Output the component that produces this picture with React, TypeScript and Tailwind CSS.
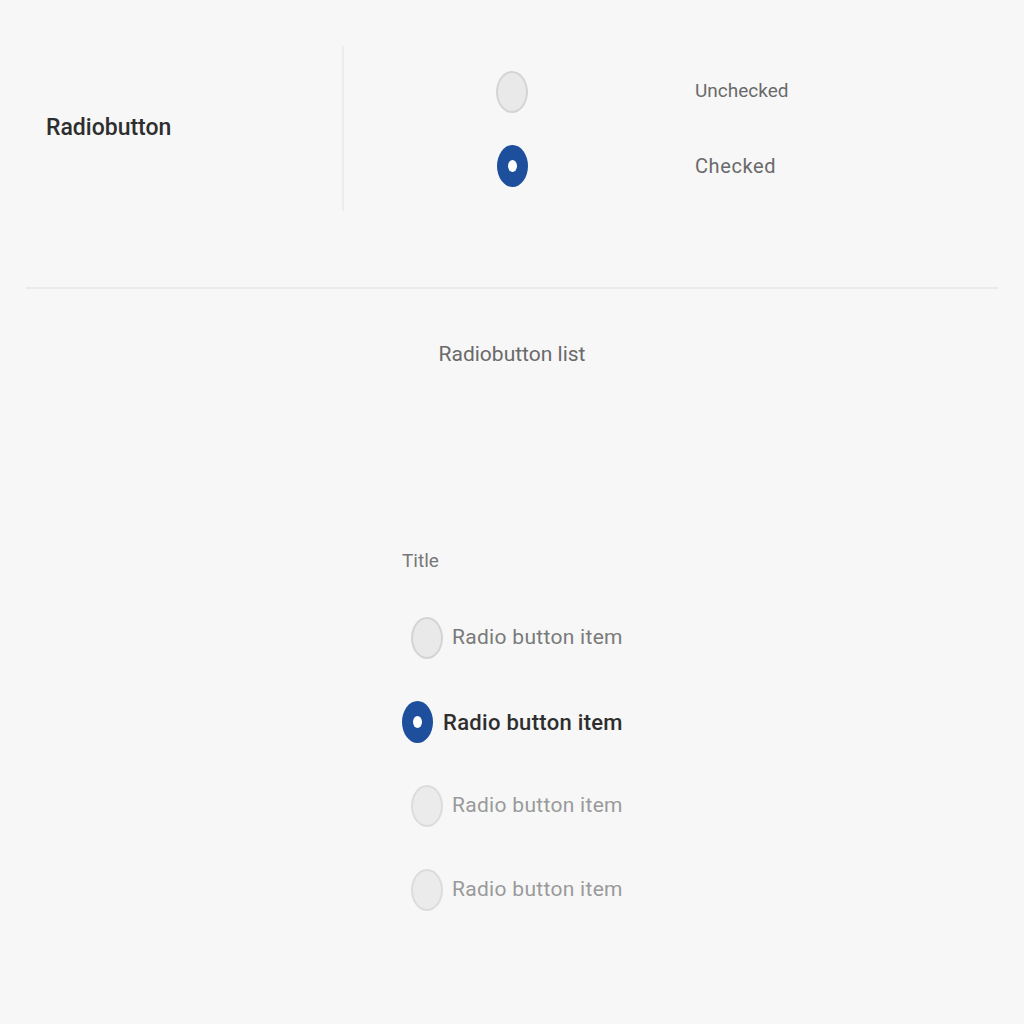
import React from "react";

const items = [
  { label: "Radio button item", state: "unchecked" },
  { label: "Radio button item", state: "checked" },
  { label: "Radio button item", state: "disabled" },
  { label: "Radio button item", state: "disabled" },
];

const Radio = ({ checked, disabled }: { checked?: boolean; disabled?: boolean }) => {
  if (checked) {
    return (
      <span className="flex h-[42px] w-[31px] shrink-0 items-center justify-center rounded-[50%] bg-[#1d4f9c]">
        <span className="h-[12px] w-[9px] rounded-[50%] bg-white" />
      </span>
    );
  }
  return (
    <span
      className={
        disabled
          ? "block h-[42px] w-[32px] shrink-0 rounded-[50%] border-2 border-[#dcdcdc] bg-[#ebebeb]"
          : "block h-[42px] w-[32px] shrink-0 rounded-[50%] border-2 border-[#d4d4d4] bg-[#e9e9e9]"
      }
    />
  );
};

export default function App() {
  return (
    <div className="min-h-screen bg-[#f7f7f7] font-['Roboto',sans-serif]">
      {/* Single radio */}
      <div className="flex pt-[46px]">
        <div className="flex w-[342px] items-center pl-[46px]">
          <span className="text-[23px] font-medium text-[#2e2e2e]">Radiobutton</span>
        </div>
        <div className="h-[165px] w-[2px] bg-[#ececec]" />
        <div className="flex flex-1 flex-col justify-center">
          <div className="flex h-[74px] items-center">
            <div className="flex w-[336px] justify-center">
              <Radio />
            </div>
            <span className="pl-[15px] text-[19px] text-[#6a6a6a]">Unchecked</span>
          </div>
          <div className="flex h-[74px] items-center">
            <div className="flex w-[336px] justify-center">
              <Radio checked />
            </div>
            <span className="pl-[15px] text-[20px] tracking-[0.6px] text-[#6a6a6a]">Checked</span>
          </div>
        </div>
      </div>

      <div className="mx-[26px] mt-[76px] h-[2px] bg-[#ebebeb]" />

      {/* Radio list */}
      <div className="mt-[52px] text-center text-[21px] leading-[26px] text-[#6a6a6a]">Radiobutton list</div>

      <div className="mt-[183px] pl-[402px]">
        <div className="text-[19px] leading-[22px] text-[#777]">Title</div>
        <div className="mt-[45px] flex flex-col gap-[42px]">
          {items.map((it, i) => (
            <div
              key={i}
              className={it.state === "checked" ? "flex items-center gap-[10px]" : "flex items-center gap-[9px] pl-[9px]"}
            >
              <Radio checked={it.state === "checked"} disabled={it.state === "disabled"} />
              <span
                className={
                  it.state === "checked"
                    ? "text-[22px] font-medium tracking-[0.3px] text-[#2e2e2e]"
                    : it.state === "disabled"
                    ? "text-[21px] tracking-[0.3px] text-[#9a9a9a]"
                    : "text-[21px] tracking-[0.3px] text-[#7a7a7a]"
                }
              >
                {it.label}
              </span>
            </div>
          ))}
        </div>
      </div>
    </div>
  );
}
